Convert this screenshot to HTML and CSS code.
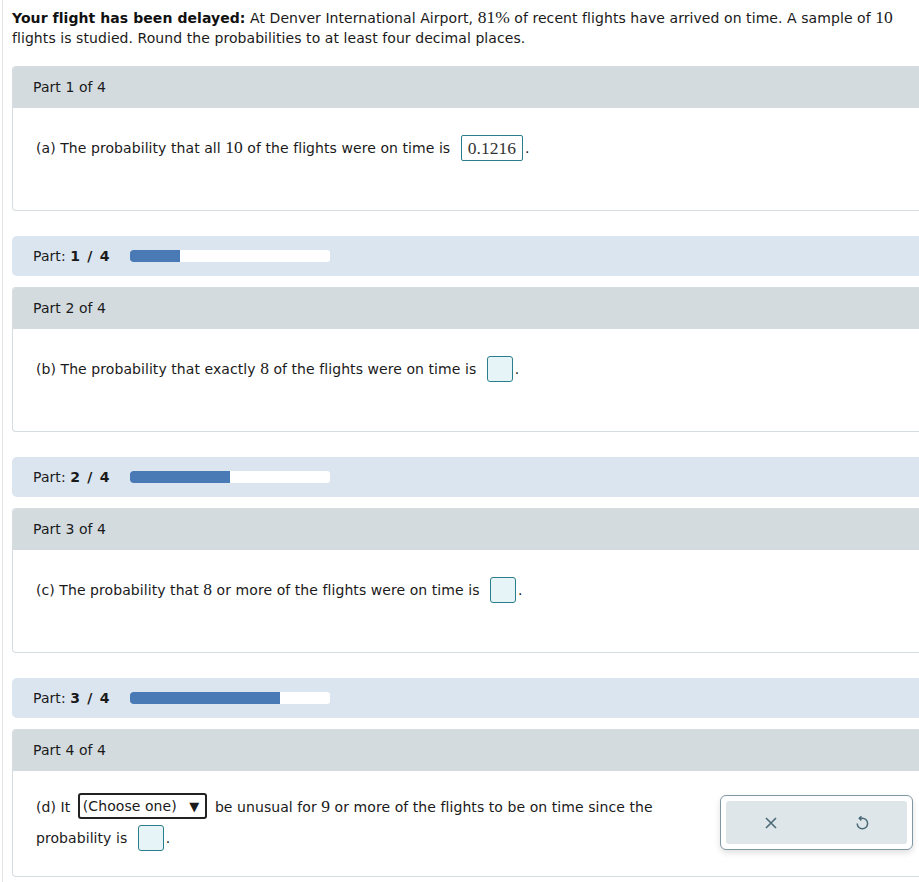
FILE: index.html
```html
<!DOCTYPE html>
<html>
<head>
<meta charset="utf-8">
<link rel="stylesheet" href="styles.css">
</head>
<body>
<div class="page">
  <p class="intro"><b>Your flight has been delayed:</b> At Denver International Airport, <span class="m">81%</span> of recent flights have arrived on time. A sample of <span class="m">10</span> flights is studied. Round the probabilities to at least four decimal places.</p>

  <section class="card first">
    <div class="card-head">Part 1 of 4</div>
    <div class="card-body">
      <p class="q">(a) The probability that all <span class="m">10</span> of the flights were on time is <span class="ans filled">0.1216</span>.</p>
    </div>
  </section>

  <div class="progress">
    <span class="plabel">Part: <b>1 / 4</b></span>
    <div class="track"><div class="fill" style="width:25%"></div></div>
  </div>

  <section class="card">
    <div class="card-head">Part 2 of 4</div>
    <div class="card-body">
      <p class="q">(b) The probability that exactly <span class="m">8</span> of the flights were on time is <span class="ans"></span>.</p>
    </div>
  </section>

  <div class="progress">
    <span class="plabel">Part: <b>2 / 4</b></span>
    <div class="track"><div class="fill" style="width:50%"></div></div>
  </div>

  <section class="card">
    <div class="card-head">Part 3 of 4</div>
    <div class="card-body">
      <p class="q">(c) The probability that <span class="m">8</span> or more of the flights were on time is <span class="ans"></span>.</p>
    </div>
  </section>

  <div class="progress">
    <span class="plabel">Part: <b>3 / 4</b></span>
    <div class="track"><div class="fill" style="width:75%"></div></div>
  </div>

  <section class="card last">
    <div class="card-head">Part 4 of 4</div>
    <div class="card-body body4">
      <p class="q q4">(d) It <span class="select">(Choose one) <span class="tri">&#9660;</span></span> be unusual for <span class="m">9</span> or more of the flights to be on time since the<br>probability is <span class="ans"></span>.</p>
      <div class="actions">
        <div class="actions-inner">
          <button class="act" aria-label="clear">
            <svg width="14" height="14" viewBox="0 0 14 14"><path d="M2 2 L12 12 M12 2 L2 12" stroke="#4a6a77" stroke-width="1.6" fill="none"/></svg>
          </button>
          <button class="act" aria-label="undo">
            <svg width="16" height="16" viewBox="0 0 16 16"><path d="M3.2 8.5 A5.2 5.2 0 1 0 8.4 3.3 H5.6" stroke="#4a6a77" stroke-width="1.5" fill="none"/><path d="M7.4 1.2 L5.3 3.3 L7.4 5.4" stroke="#4a6a77" stroke-width="1.5" fill="none"/></svg>
          </button>
        </div>
      </div>
    </div>
  </section>
</div>
</body>
</html>
```

FILE: styles.css
```css
html, body {
  margin: 0;
  padding: 0;
  background: #fff;
}
body {
  font-family: "DejaVu Sans", Verdana, sans-serif;
  font-size: 14px;
  letter-spacing: 0.07px;
  color: #1a1a1a;
  overflow: hidden;
}
.page {
  margin-left: 2px;
  border-left: 1px solid #e4e4e4;
  padding: 8px 0 0 9px;
  min-height: 882px;
  box-sizing: border-box;
}
.intro {
  margin: 0 0 18px 0;
  line-height: 20px;
  padding-right: 20px;
}
.intro b { color: #111; }
.m {
  font-family: "Liberation Serif", "Times New Roman", serif;
  font-size: 17.5px;
  letter-spacing: 0;
  line-height: 1;
}
.card {
  border: 1px solid #d5dde1;
  border-right: none;
  border-radius: 4px 0 0 4px;
  margin-right: -4px;
}
.card-head {
  background: #d3dbdf;
  height: 41px;
  line-height: 41px;
  padding-left: 20px;
  border-radius: 3px 0 0 0;
}
.card-body {
  position: relative;
  padding: 27px 0 48px 23px;
}
.q {
  margin: 0;
  line-height: 26px;
}
.ans {
  display: inline-block;
  vertical-align: middle;
  box-sizing: border-box;
  height: 26px;
  min-width: 26px;
  border: 1px solid #2a7e8b;
  border-radius: 3px;
  background: #e6f4f8;
  margin: 0 2px 0 6px;
  position: relative;
  top: -1px;
}
.ans.filled {
  background: #fff;
  border-radius: 2px;
  padding: 0 6px;
  font-family: "Liberation Serif", "Times New Roman", serif;
  font-size: 17.5px;
  letter-spacing: 0;
  line-height: 24px;
  color: #333;
}
.progress {
  margin: 25px 0 11px 0;
  height: 40px;
  background: #dae5ef;
  border-radius: 5px 0 0 5px;
  display: flex;
  align-items: center;
  padding-left: 21px;
}
.plabel {
  width: 97px;
}
.plabel b {
  letter-spacing: 1.2px;
}
.track {
  width: 200px;
  height: 12px;
  background: #fff;
  border-radius: 3px;
  overflow: hidden;
}
.fill {
  height: 100%;
  background: #4a7ab6;
  border-radius: 3px 0 0 3px;
}
.body4 {
  padding: 21px 0 22px 23px;
}
.q4 {
  line-height: 31px;
}
.select {
  display: inline-block;
  box-sizing: border-box;
  height: 26px;
  line-height: 22px;
  border: 2px solid #222;
  border-radius: 3px;
  padding: 0 6px 0 3px;
  vertical-align: middle;
  position: relative;
  top: -2px;
  margin: 0 3px 0 3px;
}
.tri {
  font-size: 13px;
  margin-left: 8px;
}
.actions {
  position: absolute;
  left: 707px;
  top: 24px;
  width: 193px;
  height: 55px;
  box-sizing: border-box;
  border: 1px solid #7f97a2;
  border-radius: 6px;
  background: #fff;
  padding: 5px;
  box-shadow: 0 3px 6px rgba(0, 0, 0, 0.12);
}
.actions-inner {
  background: #dfe6e9;
  border-radius: 3px;
  height: 100%;
  display: flex;
}
.act {
  flex: 1;
  border: none;
  background: transparent;
  padding: 0;
  display: flex;
  align-items: center;
  justify-content: center;
}
```
